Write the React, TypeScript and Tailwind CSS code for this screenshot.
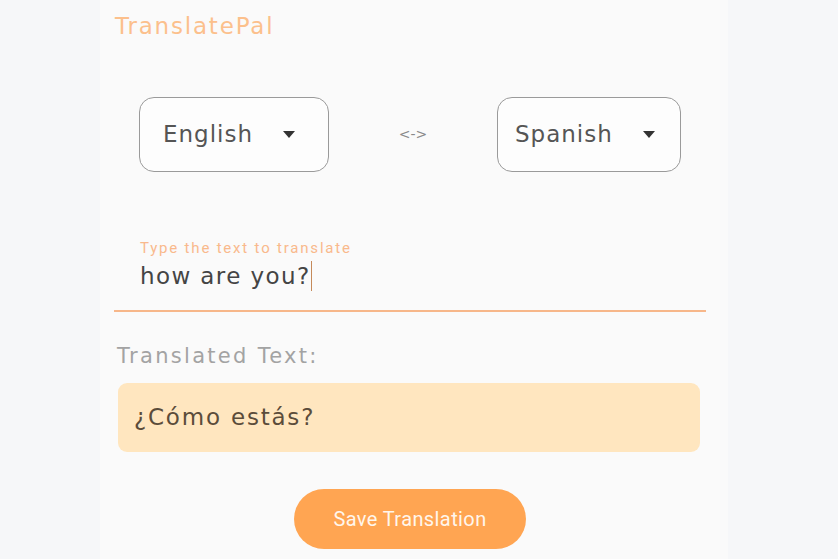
import { useState } from 'react';

function LangSelect({ label, width, padLeft }: { label: string; width: string; padLeft: string }) {
  return (
    <div
      className={`${width} ${padLeft} h-[75px] flex items-center gap-[30px] rounded-[15px] border-[1.5px] border-[#9a9a9a] bg-[#fdfdfd]`}
    >
      <span className="text-[23px] tracking-[1px] text-[#555]">{label}</span>
      <svg width="12" height="7" viewBox="0 0 12 7">
        <path d="M0 0 L12 0 L6 7 Z" fill="#333" />
      </svg>
    </div>
  );
}

export default function App() {
  const [text] = useState('how are you?');

  return (
    <div className="min-h-screen bg-[#f6f7f9] font-['DejaVu_Sans',sans-serif]">
      <div className="ml-[100px] w-[628px] min-h-[559px] bg-[#fafafa] pl-[14px] pr-[22px] pt-[12px]">
        <h1 className="text-[23px] leading-[28px] tracking-[1.8px] text-[#fcc08c] pl-[1px]">TranslatePal</h1>

        {/* language pickers */}
        <div className="mt-[57px] flex items-center pl-[25px]">
          <LangSelect label="English" width="w-[190px]" padLeft="pl-[23px]" />
          <span className="mx-[69px] w-[30px] text-center text-[14px] text-[#8a8a8a]">&lt;-&gt;</span>
          <LangSelect label="Spanish" width="w-[184px]" padLeft="pl-[17px]" />
        </div>

        {/* input */}
        <div className="mt-[68px] border-b-2 border-[#f7b78a] pl-[26px] pb-[19px]">
          <div className="text-[15px] leading-[16px] tracking-[1.8px] text-[#f9b98c] font-['Roboto',sans-serif]">
            Type the text to translate
          </div>
          <div className="mt-[5px] flex items-center text-[23px] leading-[30px] tracking-[1.4px] text-[#444]">
            {text}
            <span className="w-[1.5px] h-[30px] bg-[#c58a5a]" />
          </div>
        </div>

        <div className="mt-[31px] text-[21px] leading-[26px] tracking-[2.3px] text-[#a3a3a3] pl-[3px]">Translated Text:</div>

        <div className="mt-[14px] ml-[4px] w-[582px] h-[69px] rounded-[9px] bg-[#ffe6bf] flex items-center pl-[16px]">
          <span className="text-[23px] tracking-[1.8px] text-[#5b4c3a]">¿Cómo estás?</span>
        </div>

        <div className="mt-[37px] flex justify-center">
          <button className="w-[232px] h-[60px] rounded-full bg-[#ffa552] text-[#fff6ec] text-[20px] tracking-[0.4px] font-['Roboto',sans-serif]">
            Save Translation
          </button>
        </div>
      </div>
    </div>
  );
}
